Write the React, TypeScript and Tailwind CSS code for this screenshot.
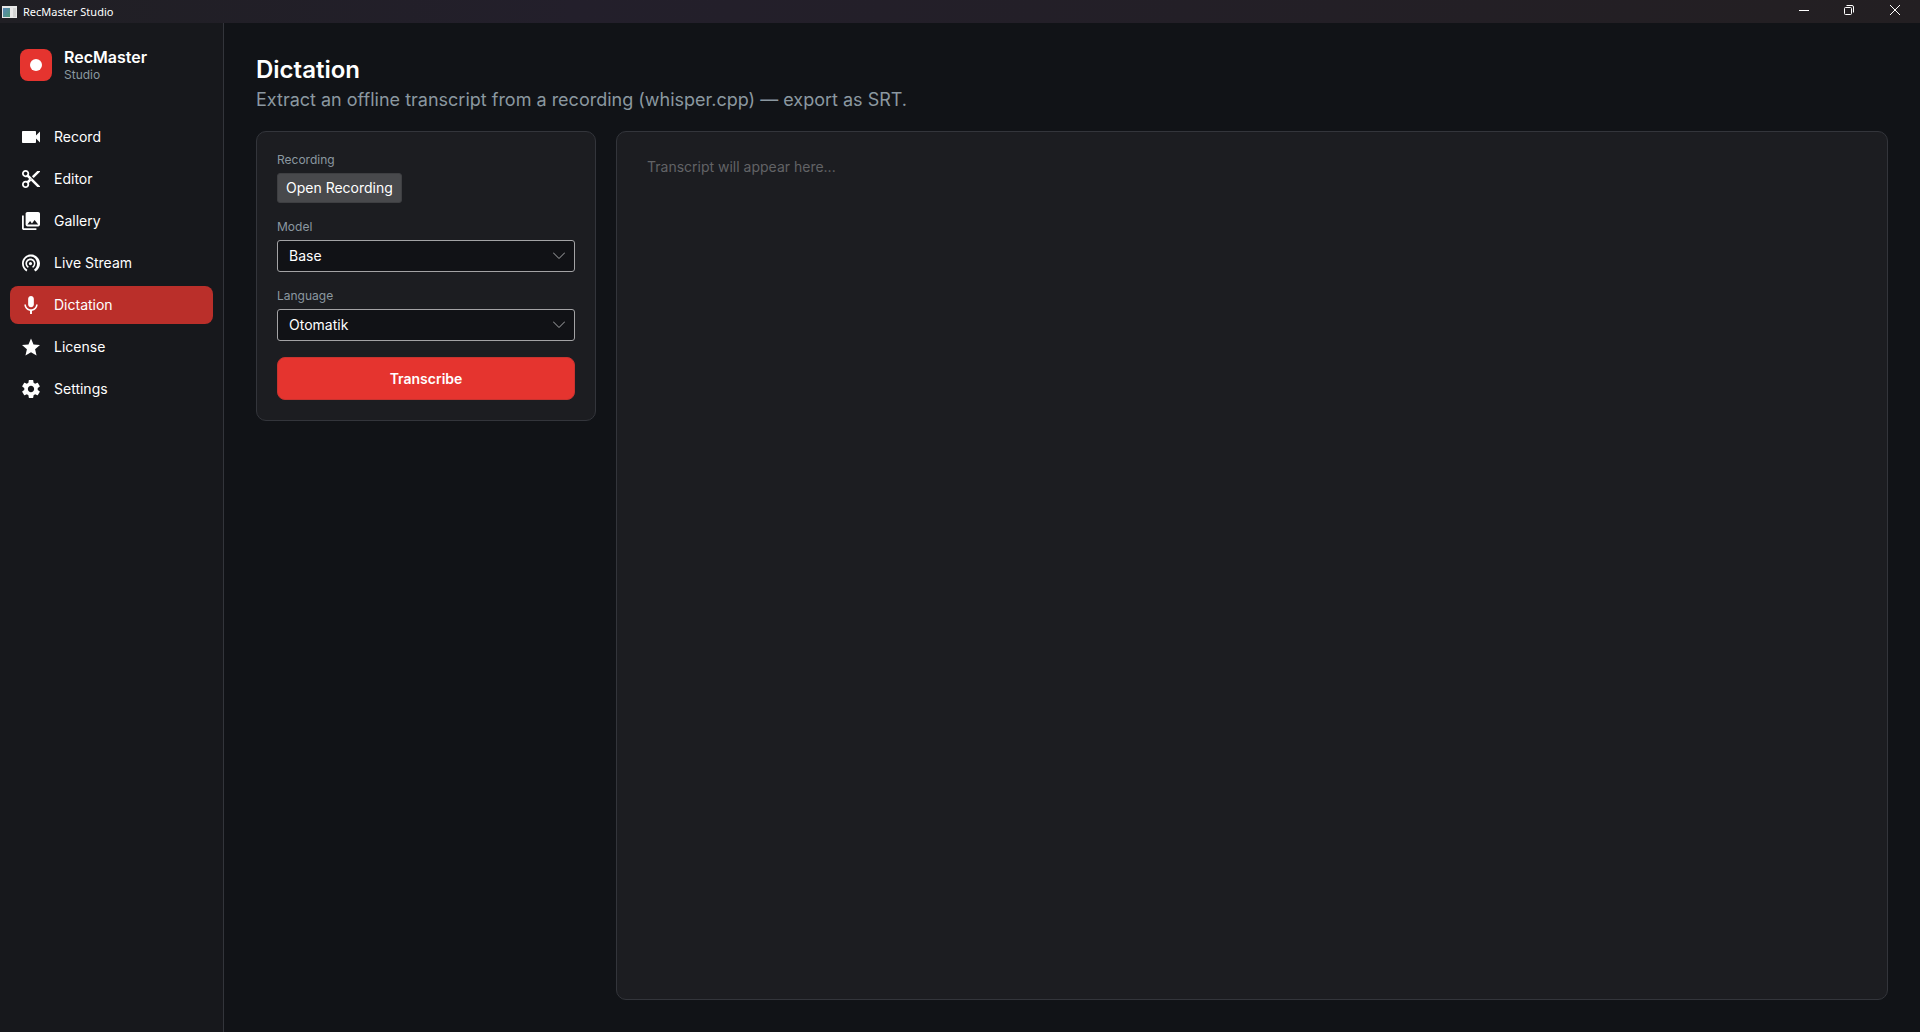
import { useState } from "react";

type NavItem = { label: string; viewBox: string; path: string };

const NAV: NavItem[] = [
  {
    label: "Record",
    viewBox: "3 6 18 12",
    path: "M17 10.5V7c0-.55-.45-1-1-1H4c-.55 0-1 .45-1 1v10c0 .55.45 1 1 1h12c.55 0 1-.45 1-1v-3.5l4 4v-11l-4 4z",
  },
  {
    label: "Editor",
    viewBox: "2 2 20 20",
    path: "M9.64 7.64c.23-.5.36-1.05.36-1.64 0-2.21-1.79-4-4-4S2 3.79 2 6s1.79 4 4 4c.59 0 1.14-.13 1.64-.36L10 12l-2.36 2.36C7.14 14.13 6.59 14 6 14c-2.21 0-4 1.79-4 4s1.79 4 4 4 4-1.79 4-4c0-.59-.13-1.14-.36-1.64L12 14l7 7h3v-1L9.64 7.64zM6 8c-1.1 0-2-.89-2-2s.9-2 2-2 2 .89 2 2-.9 2-2 2zm0 12c-1.1 0-2-.89-2-2s.9-2 2-2 2 .89 2 2-.9 2-2 2zm6-7.5c-.28 0-.5-.22-.5-.5s.22-.5.5-.5.5.22.5.5-.22.5-.5.5zM19 3l-6 6 2 2 7-7V3z",
  },
  {
    label: "Gallery",
    viewBox: "2 2 20 20",
    path: "M22 16V4c0-1.1-.9-2-2-2H8c-1.1 0-2 .9-2 2v12c0 1.1.9 2 2 2h12c1.1 0 2-.9 2-2zm-11-4l2.03 2.71L16 11l4 5H8l3-4zM2 6v14c0 1.1.9 2 2 2h14v-2H4V6H2z",
  },
  {
    label: "Live Stream",
    viewBox: "2 3 20 18.65",
    path: "M11.4 11.2a1.8 1.8 0 1 0 0 3.6 1.8 1.8 0 1 0 0-3.6zM17 13c0-3.1-2.5-5.6-5.6-5.6S5.8 9.9 5.8 13c0 2.1 1.1 3.9 2.8 4.9l.9-1.6c-1.1-.7-1.9-1.9-1.9-3.3 0-2.1 1.7-3.8 3.8-3.8s3.8 1.7 3.8 3.8c0 1.4-.8 2.6-1.9 3.3l.9 1.6c1.700-1 2.600-2.800 2.600-4.900zM12 3C6.480 3 2 7.480 2 13c0 3.700 2.010 6.920 4.990 8.650l1-1.730C5.610 18.530 4 15.960 4 13c0-4.420 3.400-8 7.500-8s7.200 3.580 7.200 8c0 2.960-1.400 5.530-3.400 6.920l1.700 1.730c2.990-1.730 5-4.950 5-8.650 0-5.520-4.480-10-10-10z",
  },
  {
    label: "Dictation",
    viewBox: "5 2 14 19",
    path: "M12 14c1.66 0 3-1.34 3-3V5c0-1.66-1.34-3-3-3S9 3.34 9 5v6c0 1.66 1.34 3 3 3zm5.3-3c0 3-2.54 5.1-5.3 5.1S6.7 14 6.7 11H5c0 3.41 2.72 6.23 6 6.72V21h2v-3.28c3.28-.48 6-3.3 6-6.72h-1.7z",
  },
  {
    label: "License",
    viewBox: "2 2 20 19",
    path: "M12 17.27L18.18 21l-1.64-7.03L22 9.24l-7.19-.61L12 2 9.19 8.63 2 9.24l5.46 4.73L5.82 21z",
  },
  {
    label: "Settings",
    viewBox: "2.27 2 19.46 20",
    path: "M19.43 12.98c.04-.32.07-.64.07-.98s-.03-.66-.07-.98l2.11-1.65c.19-.15.24-.42.12-.64l-2-3.46c-.12-.22-.39-.3-.61-.22l-2.49 1c-.52-.4-1.08-.73-1.69-.98l-.38-2.65C14.46 2.18 14.25 2 14 2h-4c-.25 0-.46.18-.49.42l-.38 2.65c-.61.25-1.17.59-1.69.98l-2.49-1c-.23-.09-.49 0-.61.22l-2 3.46c-.13.22-.07.49.12.64l2.11 1.65c-.04.32-.07.65-.07.98s.03.66.07.98l-2.11 1.65c-.19.15-.24.42-.12.64l2 3.46c.12.22.39.3.61.22l2.49-1c.52.4 1.08.73 1.69.98l.38 2.65c.03.24.24.42.49.42h4c.25 0 .46-.18.49-.42l.38-2.65c.61-.25 1.17-.59 1.69-.98l2.49 1c.23.09.49 0 .61-.22l2-3.46c.12-.22.07-.49-.12-.64l-2.11-1.65zM12 15.500c-1.930 0-3.500-1.570-3.500-3.500s1.570-3.500 3.500-3.500 3.500 1.570 3.500 3.500-1.570 3.500-3.500 3.500z",
  },
];

function TitleBar() {
  return (
    <header className="flex h-[23px] shrink-0 items-center bg-linear-to-r from-[#201f24] via-[#231f2b] via-30% to-[#231f22] text-white">
      <svg className="ml-0.5 h-3 w-[15px]" viewBox="0 0 15 12" aria-hidden="true">
        <defs>
          <linearGradient id="app-icon" x1="0" y1="0" x2="1" y2="1">
            <stop offset="0" stopColor="#5b86b8" />
            <stop offset="1" stopColor="#4f9a78" />
          </linearGradient>
        </defs>
        <rect width="15" height="12" fill="#e8e8e8" />
        <rect x="1" y="2" width="7" height="9" fill="url(#app-icon)" />
        <rect x="11" y="2" width="3" height="9" fill="#d4d4d4" />
      </svg>
      <span className="ml-1.5 font-['Noto_Sans',sans-serif] text-[11px] leading-4">RecMaster Studio</span>
      <div className="ml-auto flex h-full">
        <button type="button" aria-label="Minimize" className="flex h-full w-12 items-start justify-center pt-[5px]">
          <svg className="size-[10px]" viewBox="0 0 10 10">
            <path d="M0 5.5h10" stroke="#fff" />
          </svg>
        </button>
        <button type="button" aria-label="Restore" className="flex h-full w-[42px] items-start justify-center pt-[5px]">
          <svg className="size-[10px]" viewBox="0 0 10 10" fill="none" stroke="#fff">
            <rect x=".5" y="2.5" width="7" height="7" rx="1" />
            <path d="M2.5.5H8A1.5 1.5 0 0 1 9.5 2v5.5" />
          </svg>
        </button>
        <button type="button" aria-label="Close" className="flex h-full w-[50px] items-start justify-center pt-[5px]">
          <svg className="size-[10px]" viewBox="0 0 10 10" stroke="#fff">
            <path d="M0 0l10 10M10 0L0 10" />
          </svg>
        </button>
      </div>
    </header>
  );
}

function Sidebar({ active, onSelect }: { active: string; onSelect: (label: string) => void }) {
  return (
    <aside className="flex w-56 shrink-0 flex-col border-r border-[#33353b] bg-[#17181c]">
      <div className="flex items-center gap-3 px-5 pt-6">
        <div className="flex size-8 items-center justify-center rounded-lg bg-[#e5342f]">
          <div className="size-3 rounded-full bg-white" />
        </div>
        <div>
          <div className="text-base leading-5 font-semibold text-white">RecMaster</div>
          <div className="text-xs leading-4 text-[#8b98a0]">Studio</div>
        </div>
      </div>
      <nav className="mt-[35px] flex flex-col gap-1 px-2.5">
        {NAV.map((item) => (
          <button
            key={item.label}
            type="button"
            onClick={() => onSelect(item.label)}
            aria-current={item.label === active ? "page" : undefined}
            className={`flex h-[38px] items-center gap-3.5 rounded-lg px-3 text-sm text-white ${
              item.label === active ? "bg-[#ba2f2a]" : ""
            }`}
          >
            <svg className="size-[18px]" viewBox={item.viewBox} fill="currentColor" aria-hidden="true">
              <path d={item.path} />
            </svg>
            {item.label}
          </button>
        ))}
      </nav>
    </aside>
  );
}

function SelectField({ id, label, options }: { id: string; label: string; options: string[] }) {
  return (
    <div className="mt-4 flex flex-col gap-[5px]">
      <label htmlFor={id} className="text-xs leading-4 text-[#8b98a0]">
        {label}
      </label>
      <div className="relative">
        <select
          id={id}
          className="h-8 w-full appearance-none rounded-[3px] border border-[#a3a3a5] bg-[#111216] px-[11px] text-sm text-white"
        >
          {options.map((o) => (
            <option key={o}>{o}</option>
          ))}
        </select>
        <svg
          className="pointer-events-none absolute top-3 right-2.5 h-2 w-3"
          viewBox="0 0 12 8"
          fill="none"
          stroke="#a8a8aa"
          aria-hidden="true"
        >
          <path d="M0 .5l6 6 6-6" />
        </svg>
      </div>
    </div>
  );
}

export default function App() {
  const [active, setActive] = useState("Dictation");
  return (
    <div className="flex min-h-screen flex-col bg-[#111317] font-['Inter',sans-serif]">
      <TitleBar />
      <div className="flex flex-1">
        <Sidebar active={active} onSelect={setActive} />
        <main className="flex min-w-0 flex-1 flex-col px-8 pt-[33px] pb-8">
          <h1 className="text-2xl leading-7 font-semibold text-white">Dictation</h1>
          <p className="mt-1 text-lg leading-6 text-[#8b98a0]">
            Extract an offline transcript from a recording (whisper.cpp) — export as SRT.
          </p>
          <div className="mt-[19px] flex flex-1 items-start gap-5">
            <section className="w-[340px] shrink-0 rounded-[10px] border border-[#33353b] bg-[#1c1d21] p-5">
              <div className="text-xs leading-4 text-[#8b98a0]">Recording</div>
              <button
                type="button"
                className="mt-[5px] block h-[30px] rounded-[3px] border border-[#3e3f42] bg-[#48494c] px-2 text-sm text-white"
              >
                Open Recording
              </button>
              <SelectField id="model" label="Model" options={["Base"]} />
              <SelectField id="language" label="Language" options={["Otomatik"]} />
              <button
                type="button"
                className="mt-4 h-[43px] w-full rounded-lg border border-[#c8332f] bg-[#e5342f] text-sm font-semibold text-white"
              >
                Transcribe
              </button>
            </section>
            <section className="flex min-w-0 flex-1 self-stretch rounded-[10px] border border-[#33353b] bg-[#1c1d21]">
              <textarea
                aria-label="Transcript"
                placeholder="Transcript will appear here..."
                className="flex-1 resize-none rounded-[10px] bg-transparent px-[30px] py-[25px] text-sm leading-5 text-white outline-none placeholder:text-[#626366]"
              />
            </section>
          </div>
        </main>
      </div>
    </div>
  );
}
